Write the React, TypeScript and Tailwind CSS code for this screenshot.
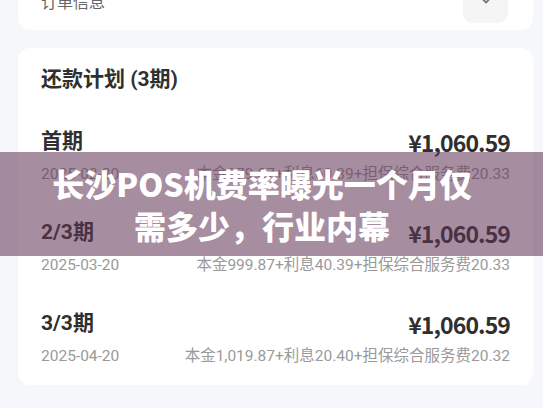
import React from "react";

const rows = [
  { t: "首期", d: "2025-02-20", detail: "本金979.87+利息60.39+担保综合服务费20.33" },
  { t: "2/3期", d: "2025-03-20", detail: "本金999.87+利息40.39+担保综合服务费20.33" },
  { t: "3/3期", d: "2025-04-20", detail: "本金1,019.87+利息20.40+担保综合服务费20.32" },
];

export default function App() {
  return (
    <div
      className="relative w-[543px] h-[408px] overflow-hidden bg-[#f6f7fa]"
      style={{ fontFamily: 'Roboto, "Noto Sans CJK SC", sans-serif' }}
    >
      <div className="-mt-[30px] ml-[18px] mr-[10px] flex flex-col">
        <div className="h-[60px] bg-white rounded-b-[12px] flex items-center justify-between pl-[23px] pr-[25px]">
          <span className="mt-[6px] text-[16px] text-[#666]">订单信息</span>
          <div className="w-[45px] h-[45px] rounded-[10px] bg-[#f5f5f5] flex items-center justify-center">
            <svg width="16" height="16" viewBox="0 0 16 16" fill="none">
              <path d="M3.5 6l4.5 4.5L12.5 6" stroke="#777" strokeWidth="1.8" strokeLinecap="round" strokeLinejoin="round" />
            </svg>
          </div>
        </div>
        <div className="mt-[18px] bg-white rounded-[12px] px-[23px] pt-[18px] pb-[17px] flex flex-col">
          <div className="h-[28px] flex items-center text-[21px] font-bold text-[#2f2f2f]">还款计划 (3期)</div>
          <div className="mt-[34px] flex flex-col gap-[33px]">
            {rows.map((r) => (
              <div key={r.t} className="flex flex-col">
                <div className="h-[28px] flex items-center justify-between">
                  <span className="text-[21px] font-bold text-[#2f2f2f]">{r.t}</span>
                  <span
                    className="text-[23px] font-bold text-[#2f2f2f] tracking-[-0.9px]"
                    style={{ fontFamily: '"Noto Sans CJK SC", sans-serif' }}
                  >
                    ¥1,060.59
                  </span>
                </div>
                <div className="mt-[8px] h-[22px] flex items-center justify-between text-[15.5px] text-[#9a9a9a]">
                  <span>{r.d}</span>
                  <span>{r.detail}</span>
                </div>
              </div>
            ))}
          </div>
        </div>
      </div>
      <div className="absolute left-0 right-0 top-[152px] h-[104px] bg-[rgba(96,52,86,0.56)] flex flex-col items-center justify-center pr-[19px]">
        <div
          className="text-white font-black text-[32px] leading-[42px] text-center"
          style={{ fontFamily: '"Noto Sans CJK SC", sans-serif' }}
        >
          <div>长沙POS机费率曝光一个月仅</div>
          <div>需多少，行业内幕</div>
        </div>
      </div>
    </div>
  );
}
